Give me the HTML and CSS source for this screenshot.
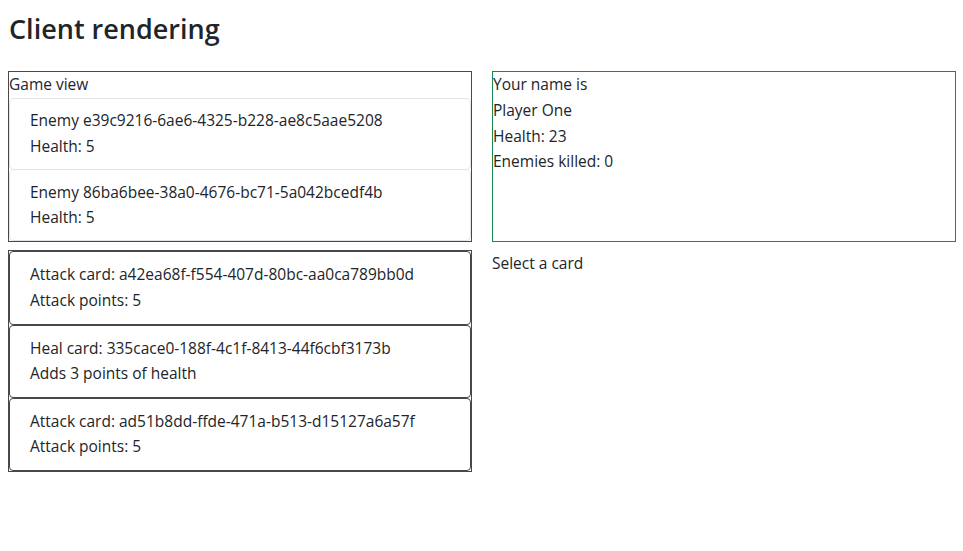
FILE: index.html
```html
<!DOCTYPE html>
<html lang="en">
<head>
<meta charset="utf-8">
<title>Client rendering</title>
<link rel="stylesheet" href="styles.css">
</head>
<body>
<div class="page">
  <h3 class="title">Client rendering</h3>
  <div class="grid">
    <div class="game-view">
      <div class="game-label">Game view</div>
      <ul class="enemy-list">
        <li class="enemy">
          <div>Enemy e39c9216-6ae6-4325-b228-ae8c5aae5208</div>
          <div>Health: 5</div>
        </li>
        <li class="enemy">
          <div>Enemy 86ba6bee-38a0-4676-bc71-5a042bcedf4b</div>
          <div>Health: 5</div>
        </li>
      </ul>
    </div>
    <div class="player">
      <div>Your name is</div>
      <div>Player One</div>
      <div>Health: 23</div>
      <div>Enemies killed: 0</div>
    </div>
    <div class="cards">
      <div class="card">
        <div>Attack card: a42ea68f-f554-407d-80bc-aa0ca789bb0d</div>
        <div>Attack points: 5</div>
      </div>
      <div class="card">
        <div>Heal card: 335cace0-188f-4c1f-8413-44f6cbf3173b</div>
        <div>Adds 3 points of health</div>
      </div>
      <div class="card">
        <div>Attack card: ad51b8dd-ffde-471a-b513-d15127a6a57f</div>
        <div>Attack points: 5</div>
      </div>
    </div>
    <div class="hint">Select a card</div>
  </div>
</div>
</body>
</html>
```

FILE: styles.css
```css
* { box-sizing: border-box; }

html, body {
  margin: 0;
  padding: 0;
  background: #ffffff;
}

body {
  font-family: "Open Sans", "Liberation Sans", sans-serif;
  font-size: 15.5px;
  line-height: 25.6px;
  color: #212529;
}

.page {
  padding: 0 8px;
}

.title {
  margin: 13px 0 26px 1px;
  font-size: 27px;
  line-height: 1.2;
  font-weight: 600;
  color: #212529;
}

.grid {
  display: grid;
  grid-template-columns: 464px 464px;
  column-gap: 20px;
  row-gap: 7px;
  align-items: start;
}

.game-view {
  border: 1px solid #48484c;
  align-self: stretch;
}

.game-label {
  line-height: 25.6px;
}

.enemy-list {
  list-style: none;
  margin: 0;
  padding: 0;
}

.enemy {
  border: 1px solid #dfe2e6;
  border-radius: 5px;
  padding: 9.5px 20px;
}

.enemy + .enemy {
  border-top-width: 0;
}

.player {
  border: 1px solid #198754;
  align-self: stretch;
}

.cards {
  border: 1px solid #48484c;
  margin-top: 1px;
}

.card {
  border: 1px solid #48484c;
  border-radius: 4px;
  padding: 10px 20px;
}

.hint {
  margin-top: 2px;
}
```
